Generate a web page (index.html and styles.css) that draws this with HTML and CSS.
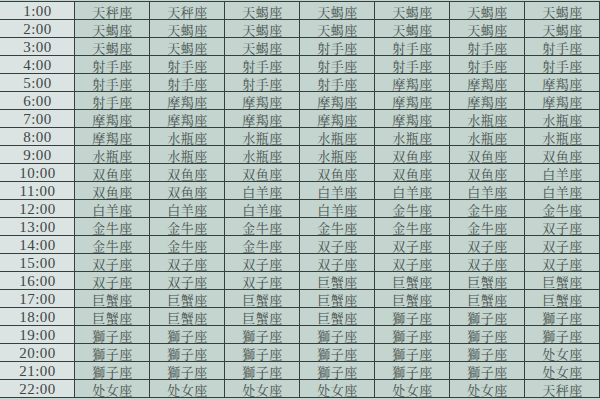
FILE: index.html
```html
<!DOCTYPE html>
<html lang="zh">
<head>
<meta charset="utf-8">
<title>星座表</title>
<link rel="stylesheet" href="styles.css">
</head>
<body>
<div class="sheet">
<div class="t">1:00</div><div class="c">天秤座</div><div class="c">天秤座</div><div class="c">天蝎座</div><div class="c">天蝎座</div><div class="c">天蝎座</div><div class="c">天蝎座</div><div class="c">天蝎座</div>
<div class="t">2:00</div><div class="c">天蝎座</div><div class="c">天蝎座</div><div class="c">天蝎座</div><div class="c">天蝎座</div><div class="c">天蝎座</div><div class="c">天蝎座</div><div class="c">天蝎座</div>
<div class="t">3:00</div><div class="c">天蝎座</div><div class="c">天蝎座</div><div class="c">天蝎座</div><div class="c">射手座</div><div class="c">射手座</div><div class="c">射手座</div><div class="c">射手座</div>
<div class="t">4:00</div><div class="c">射手座</div><div class="c">射手座</div><div class="c">射手座</div><div class="c">射手座</div><div class="c">射手座</div><div class="c">射手座</div><div class="c">射手座</div>
<div class="t">5:00</div><div class="c">射手座</div><div class="c">射手座</div><div class="c">射手座</div><div class="c">射手座</div><div class="c">摩羯座</div><div class="c">摩羯座</div><div class="c">摩羯座</div>
<div class="t">6:00</div><div class="c">射手座</div><div class="c">摩羯座</div><div class="c">摩羯座</div><div class="c">摩羯座</div><div class="c">摩羯座</div><div class="c">摩羯座</div><div class="c">摩羯座</div>
<div class="t">7:00</div><div class="c">摩羯座</div><div class="c">摩羯座</div><div class="c">摩羯座</div><div class="c">摩羯座</div><div class="c">摩羯座</div><div class="c">水瓶座</div><div class="c">水瓶座</div>
<div class="t">8:00</div><div class="c">摩羯座</div><div class="c">水瓶座</div><div class="c">水瓶座</div><div class="c">水瓶座</div><div class="c">水瓶座</div><div class="c">水瓶座</div><div class="c">水瓶座</div>
<div class="t">9:00</div><div class="c">水瓶座</div><div class="c">水瓶座</div><div class="c">水瓶座</div><div class="c">水瓶座</div><div class="c">双鱼座</div><div class="c">双鱼座</div><div class="c">双鱼座</div>
<div class="t">10:00</div><div class="c">双鱼座</div><div class="c">双鱼座</div><div class="c">双鱼座</div><div class="c">双鱼座</div><div class="c">双鱼座</div><div class="c">双鱼座</div><div class="c">白羊座</div>
<div class="t">11:00</div><div class="c">双鱼座</div><div class="c">双鱼座</div><div class="c">白羊座</div><div class="c">白羊座</div><div class="c">白羊座</div><div class="c">白羊座</div><div class="c">白羊座</div>
<div class="t">12:00</div><div class="c">白羊座</div><div class="c">白羊座</div><div class="c">白羊座</div><div class="c">白羊座</div><div class="c">金牛座</div><div class="c">金牛座</div><div class="c">金牛座</div>
<div class="t">13:00</div><div class="c">金牛座</div><div class="c">金牛座</div><div class="c">金牛座</div><div class="c">金牛座</div><div class="c">金牛座</div><div class="c">金牛座</div><div class="c">双子座</div>
<div class="t">14:00</div><div class="c">金牛座</div><div class="c">金牛座</div><div class="c">金牛座</div><div class="c">双子座</div><div class="c">双子座</div><div class="c">双子座</div><div class="c">双子座</div>
<div class="t">15:00</div><div class="c">双子座</div><div class="c">双子座</div><div class="c">双子座</div><div class="c">双子座</div><div class="c">双子座</div><div class="c">双子座</div><div class="c">双子座</div>
<div class="t">16:00</div><div class="c">双子座</div><div class="c">双子座</div><div class="c">双子座</div><div class="c">巨蟹座</div><div class="c">巨蟹座</div><div class="c">巨蟹座</div><div class="c">巨蟹座</div>
<div class="t">17:00</div><div class="c">巨蟹座</div><div class="c">巨蟹座</div><div class="c">巨蟹座</div><div class="c">巨蟹座</div><div class="c">巨蟹座</div><div class="c">巨蟹座</div><div class="c">巨蟹座</div>
<div class="t">18:00</div><div class="c">巨蟹座</div><div class="c">巨蟹座</div><div class="c">巨蟹座</div><div class="c">巨蟹座</div><div class="c">獅子座</div><div class="c">獅子座</div><div class="c">獅子座</div>
<div class="t">19:00</div><div class="c">獅子座</div><div class="c">獅子座</div><div class="c">獅子座</div><div class="c">獅子座</div><div class="c">獅子座</div><div class="c">獅子座</div><div class="c">獅子座</div>
<div class="t">20:00</div><div class="c">獅子座</div><div class="c">獅子座</div><div class="c">獅子座</div><div class="c">獅子座</div><div class="c">獅子座</div><div class="c">獅子座</div><div class="c">处女座</div>
<div class="t">21:00</div><div class="c">獅子座</div><div class="c">獅子座</div><div class="c">獅子座</div><div class="c">獅子座</div><div class="c">獅子座</div><div class="c">獅子座</div><div class="c">处女座</div>
<div class="t">22:00</div><div class="c">处女座</div><div class="c">处女座</div><div class="c">处女座</div><div class="c">处女座</div><div class="c">处女座</div><div class="c">处女座</div><div class="c">天秤座</div>
</div>
</body>
</html>
```
FILE: styles.css
```css
html, body {
  margin: 0;
  padding: 0;
  background: #c3d5ce;
  overflow: hidden;
}
.sheet {
  display: grid;
  grid-template-columns: repeat(8, 75px);
  grid-auto-rows: 18px;
  border-top: 1px solid #34403d;
  margin-top: 1px;
  width: 600px;
}
.t, .c {
  box-sizing: border-box;
  border-right: 1px solid #34403d;
  border-bottom: 1px solid #34403d;
  display: flex;
  align-items: center;
  justify-content: center;
  line-height: 1;
  padding-top: 1px;
}
.t {
  background: #dce4e3;
  color: #3f4745;
  font-family: "Liberation Serif", serif;
  font-size: 15px;
  letter-spacing: 0.5px;
  padding-left: 1px;
}
.c {
  background: #c3d5ce;
  color: #48504e;
  font-family: "Noto Serif CJK SC", "Noto Sans CJK SC", serif;
  font-size: 13px;
  letter-spacing: 0.5px;
  padding-left: 1px;
}
```
